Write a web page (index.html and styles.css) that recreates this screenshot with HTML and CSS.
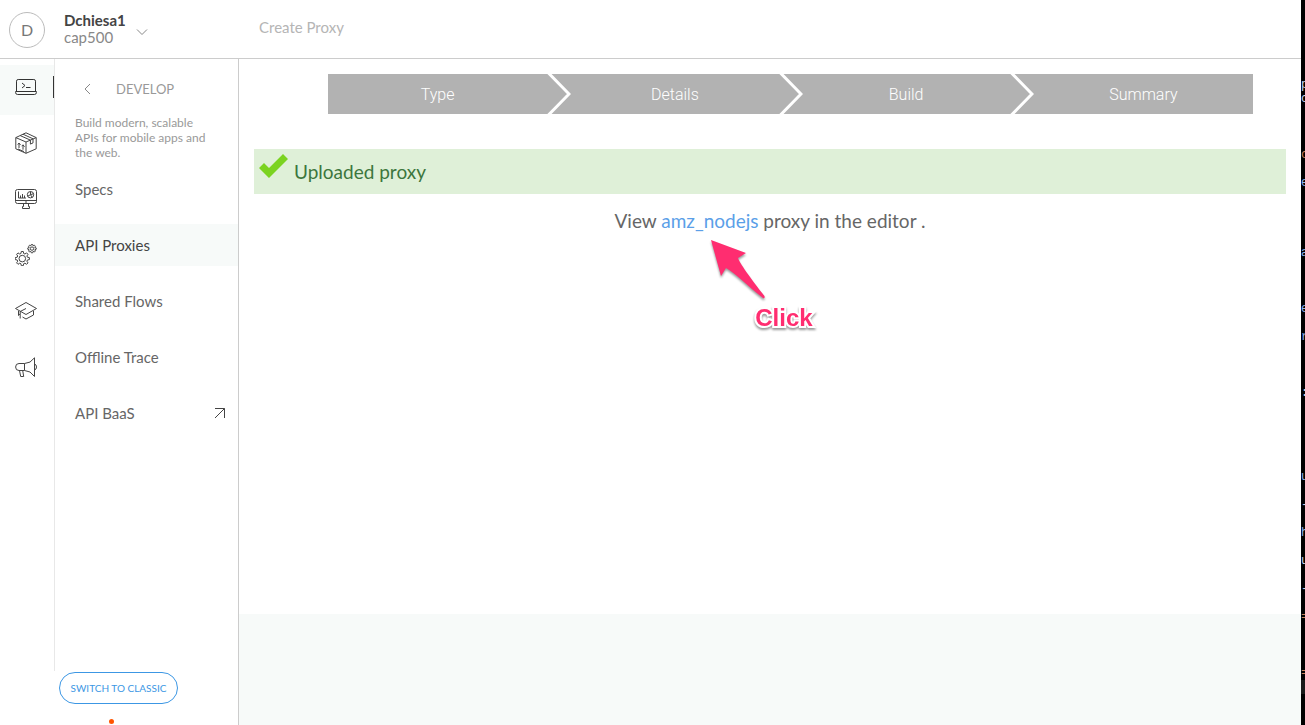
FILE: index.html
```html
<!DOCTYPE html>
<html lang="en">
<head>
<meta charset="utf-8">
<meta name="viewport" content="width=device-width, initial-scale=1">
<title>Create Proxy</title>
<link rel="stylesheet" href="styles.css">
</head>
<body>
<div class="app">
  <header class="topbar">
    <button class="account" type="button">
      <span class="avatar">D</span>
      <span class="account-names"><strong class="user">Dchiesa1</strong><span class="org">cap500</span></span>
      <svg class="caret" viewBox="0 0 12 8" width="12" height="8"><path d="M1 1.500l5 5 5-5"/></svg>
    </button>
    <h1 class="page-title">Create Proxy</h1>
  </header>
  <div class="body">
    <div class="sidebar">
      <div class="navs">
        <nav class="rail" aria-label="Sections">
          <a class="rail-link current" href="#develop" aria-label="Develop">
            <svg viewBox="0 0 22 22" width="22" height="22"><path d="M1.500 15V5.200q0-1.700 1.700-1.700h15.600q1.700 0 1.700 1.700V15M.6 15.500h20.800v1q0 2-2 2H2.600q-2 0-2-2zM7 7l3 2.500L7 12M11 11.500h4.500"/></svg>
          </a>
          <a class="rail-link" href="#publish" aria-label="Publish">
            <svg viewBox="0 0 22 22" width="22" height="22"><path d="M11 .8L.8 5.600v11.200L11 21.300l10.200-4.500V5.600zM.8 5.600L11 10l10.200-4.400M11 10v11.300M5.200 3.600l10.200 4.500v4l2.600-1.200V7M8 2.200l10 4.600M4 16v-4.500M2.700 12.500L4 11l1.500 2M8 17.700v-4.500M6.700 14.200l1.300-1.400 1.500 2M3 17l6 2.600"/></svg>
          </a>
          <a class="rail-link" href="#analyze" aria-label="Analyze">
            <svg viewBox="0 0 22 22" width="22" height="22"><path d="M2.500 1.500h17q2 0 2 2v10q0 2-2 2h-17q-2 0-2-2v-10q0-2 2-2zM.5 12.500h21M10 14h2M8.500 15.500v3h-1v2h7v-2h-1v-3M3.500 3.500v6.500h7.500M5.500 10V7.500M7.500 10V6M9.500 10V7.500"/><circle cx="15.500" cy="6.700" r="3.200"/><path d="M15.500 3.500v3.200l3-1M15.500 6.700l1.700 2.600M15.500 6.700l-2.800 1.500"/></svg>
          </a>
          <a class="rail-link" href="#admin" aria-label="Admin">
            <svg viewBox="0 0 22 22" width="22" height="22"><path d="M6.300 7.500h2l.4 2 1.200.5 1.700-1.100 1.400 1.400-1.100 1.700.5 1.200 2 .4v2l-2 .4-.5 1.200 1.100 1.700-1.400 1.400-1.700-1.100-1.200.5-.4 2h-2l-.4-2-1.200-.5L3 20.300l-1.400-1.400 1.100-1.700-.5-1.200-2-.4v-2l2-.4.5-1.200-1.100-1.700L3 8.900 4.700 10l1.200-.5z"/><circle cx="7.300" cy="14.600" r="3.300"/><path d="M16.300.5h1.400l.4 1.300 1.300-.6 1 1-.6 1.300 1.400.4v1.400l-1.400.5.6 1.200-1 1-1.300-.6-.4 1.400h-1.400l-.5-1.400-1.200.6-1-1 .6-1.200-1.400-.5V3.900l1.400-.4-.6-1.300 1-1 1.200.6z"/><circle cx="17" cy="4.600" r="1.700"/></svg>
          </a>
          <a class="rail-link" href="#learn" aria-label="Learn">
            <svg viewBox="0 0 22 22" width="22" height="22"><path d="M11 2.500l10.500 6L11 14.500.5 8.500zM11 8.500l-5.800 3v7M3.500 11v4.500M3.500 15.500L5 13.800M7.500 17l3.500 2 7.500-4v-4"/></svg>
          </a>
          <a class="rail-link" href="#announcements" aria-label="Announcements">
            <svg viewBox="0 0 22 22" width="22" height="22"><path d="M9.500 7.500H4Q.6 7.500.6 11T4 14.500h5.500zM9.500 7.500q6 0 10-5.700v18.700q-4-6-10-6M19.500 8q2 .5 2 3t-2 3M4.500 14.500l1.200 6h3l-1-6"/></svg>
          </a>
        </nav>
        <nav class="menu" aria-label="Develop">
          <div class="menu-head">
            <button class="back" type="button" aria-label="Back"><svg viewBox="0 0 7 12" width="7" height="12"><path d="M6 1L1 6l5 5"/></svg></button>
            <h2 class="menu-title">DEVELOP</h2>
          </div>
          <p class="menu-text">Build modern, scalable APIs for mobile apps and the web.</p>
          <ul class="menu-list">
            <li><a class="menu-link" href="#specs">Specs</a></li>
            <li><a class="menu-link current" href="#proxies">API Proxies</a></li>
            <li><a class="menu-link" href="#flows">Shared Flows</a></li>
            <li><a class="menu-link" href="#trace">Offline Trace</a></li>
            <li><a class="menu-link" href="#baas">API BaaS<svg class="external" viewBox="0 0 12 12" width="12" height="12"><path d="M2 1.500h9.500V11M11.500 1.500L2 11"/></svg></a></li>
          </ul>
        </nav>
      </div>
      <div class="side-foot">
        <button class="switch" type="button">SWITCH TO CLASSIC</button>
        <span class="brand-dot"></span>
      </div>
    </div>
    <main class="main">
      <section class="content">
        <ol class="steps">
          <li class="step">Type<svg class="chevron" viewBox="0 0 24 40" width="24" height="40"><path d="M1 -1.500L22 20L1 41.500"/></svg></li>
          <li class="step">Details<svg class="chevron" viewBox="0 0 24 40" width="24" height="40"><path d="M1 -1.500L22 20L1 41.500"/></svg></li>
          <li class="step">Build<svg class="chevron" viewBox="0 0 24 40" width="24" height="40"><path d="M1 -1.500L22 20L1 41.500"/></svg></li>
          <li class="step">Summary</li>
        </ol>
        <div class="alert" role="status">
          <svg class="check" viewBox="0 0 30 26" width="30" height="26"><path d="M0 15l5-5 5 5L24 1l5 5-19 19z"/></svg>
          <span>Uploaded proxy</span>
        </div>
        <p class="result">View <a class="proxy-link" href="#amz_nodejs">amz_nodejs<svg class="pointer" viewBox="0 0 64 68" width="64" height="68"><path d="M4 4L39 17L31 22C32 26 44 43 57.500 60Q58 63 56 62C42 51 28 37 19 32L14 40Z"/></svg><span class="note">Click</span></a> proxy in the editor .</p>
      </section>
      <footer class="footer"></footer>
    </main>
  </div>
</div>
<aside class="terminal" aria-hidden="true">
<pre class="terminal-text">





p
c



<i>c</i>

<b>e</b>




<b>a</b>



<b>e</b>

<b>r</b>



:





<b>u</b>

-

<b>h</b>

u

-

<i>=</i>



<i>=</i>
<span class="terminal-line"> </span></pre>
</aside>
</body>
</html>
```
FILE: styles.css
```css
* { box-sizing: border-box; }
body {
  margin: 0;
  height: 100vh;
  display: flex;
  overflow: hidden;
  background: #fff;
  color: #666;
  font-family: Lato, "Liberation Sans", sans-serif;
  font-size: 15px;
}
button { font: inherit; color: inherit; background: none; border: 0; padding: 0; cursor: pointer; }
a { color: inherit; text-decoration: none; }
h1, h2, p, ul, ol { margin: 0; padding: 0; font-weight: 400; }
ul, ol { list-style: none; }
svg { fill: none; stroke: currentColor; display: block; }

.app { flex: 1; min-width: 0; display: flex; flex-direction: column; }
.topbar { display: flex; align-items: center; height: 59px; padding-top: 2px; border-bottom: 1px solid #ccc; flex: none; }
.account { width: 239px; padding-left: 9px; display: flex; align-items: center; text-align: left; }
.avatar {
  width: 36px; height: 36px; border: 1px solid #bbb; border-radius: 50%;
  display: flex; align-items: center; justify-content: center;
  font-size: 16px; color: #777; padding-bottom: 1px;
}
.account-names { margin: 0 10px 0 19px; display: flex; flex-direction: column; line-height: 17px; padding-bottom: 3px; }
.user { color: #444; }
.org { color: #888; }
.caret { color: #888; margin-top: 4px; }
.page-title { margin-left: 20px; padding-bottom: 7px; font-size: 15px; color: #b5b5b5; }

.body { flex: 1; display: flex; min-height: 0; }
.sidebar { width: 239px; flex: none; border-right: 1px solid #ccc; display: flex; flex-direction: column; }
.navs { flex: 1; min-height: 0; display: flex; }
.rail { width: 55px; padding-top: 6px; border-right: 1px solid #e8e8e8; display: flex; flex-direction: column; gap: 6px; }
.rail-link { height: 50px; padding: 0 2px 6px 15px; display: flex; align-items: center; justify-content: space-between; color: #444; }
.rail-link.current { background: #f7faf9; color: #333; padding-right: 0; }
.rail-link.current::after { content: ""; width: 1px; height: 22px; background: #333; }

.menu { flex: 1; padding-top: 20px; }
.menu-head { display: flex; align-items: center; padding-left: 29px; height: 20px; gap: 25px; }
.back { color: #888; }
.menu-title { font-size: 13px; color: #999; }
.menu-text { padding: 16px 28px 0 20px; font-size: 12px; line-height: 15px; color: #999; }
.menu-list { padding-top: 8px; display: flex; flex-direction: column; gap: 14px; }
.menu-link { height: 42px; padding: 0 13px 0 20px; display: flex; align-items: center; justify-content: space-between; }
.menu-link.current { background: #f7faf9; color: #444; }
.external { color: #444; }

.side-foot { height: 54px; flex: none; padding: 1px 0 0 59px; overflow: hidden; }
.switch { display: block; width: 119px; height: 32px; border: 1px solid #3c97e4; border-radius: 16px; color: #3c97e4; font-size: 10px; }
.brand-dot { display: block; width: 5px; height: 5px; margin: 15px 0 0 50px; border-radius: 50%; background: #ff5400; }

.main { flex: 1; min-width: 0; display: flex; flex-direction: column; }
.content { flex: 1; padding: 15px; }
.steps { margin: 0 33px 0 74px; height: 40px; display: grid; grid-template-columns: repeat(4, 1fr); background: #b2b2b2; color: #fff; font-family: Roboto, sans-serif; font-size: 16px; }
.step { padding: 0 12px; display: flex; align-items: center; justify-content: center; position: relative; font-weight: 300; }
.step:first-child { padding-left: 0; }
.step:last-child { padding-right: 0; }
.chevron { position: absolute; right: -12px; top: 0; stroke-width: 3; }
.alert { margin-top: 35px; height: 45px; padding: 0 5px; display: flex; align-items: center; gap: 5px; background: #dff0d8; color: #3c763d; font-size: 19px; }
.check { fill: #7bd320; stroke: none; margin-bottom: 12px; }
.result { margin-top: 15px; text-align: center; font-size: 19px; line-height: 24px; }
.proxy-link { position: relative; color: #5b9fe8; }
.pointer { position: absolute; left: 46px; top: 27px; fill: #ff2d70; stroke: none; filter: drop-shadow(0 2px 1px #0006); }
.note {
  position: absolute; left: 94px; top: 95px;
  font: bold 24px/28px "Liberation Sans", sans-serif; color: #ff2d70;
  -webkit-text-stroke: 4px #fff; paint-order: stroke fill;
  filter: drop-shadow(0 2px 1px #0006);
}
.footer { height: 111px; background: #f7faf9; }

.terminal { width: 4px; flex: none; overflow: hidden; background: #000; color: #c7d5ee; }
.terminal-text { margin: 0; padding-top: 8px; font: 12px/14px "Liberation Mono", monospace; }
.terminal-text b { color: #8fb4ed; font-weight: 400; }
.terminal-text i { color: #c98058; font-style: normal; }
.terminal-line { display: block; background: #1a1a1a; }
```
